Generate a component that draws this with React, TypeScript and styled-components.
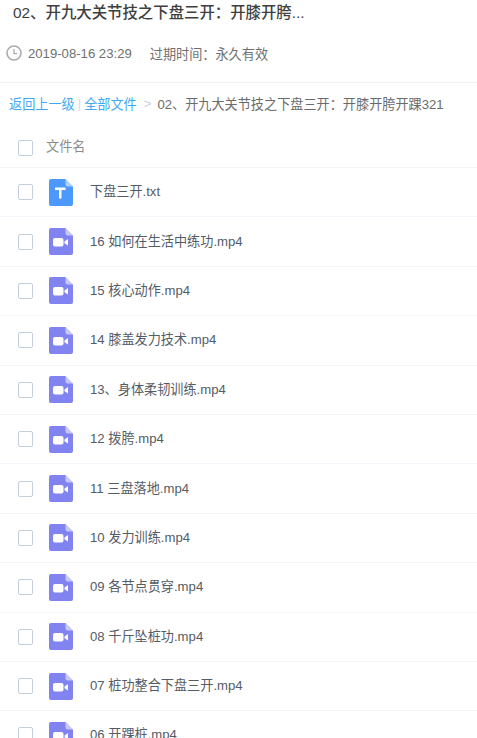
import styled, { createGlobalStyle } from "styled-components";

const GlobalStyle = createGlobalStyle`
    html, body {
        margin: 0;
        padding: 0;
        height: 100%;
        overflow: hidden;
        background-color: #fff;
        font-family: "Liberation Sans", "Noto Sans CJK SC", sans-serif;
    }
`

const Page = styled.div`
    width: 477px;
    height: 738px;
    overflow: hidden;
`

const Title = styled.h1`
    margin: 0;
    padding: 2px 0 1px 13px;
    height: 21px;
    font-size: 15.4px;
    line-height: 21px;
    font-weight: 500;
    color: #3f3f3f;
`

const Meta = styled.div`
    display: flex;
    align-items: center;
    height: 58px;
    padding-left: 6px;
    border-bottom: 1px solid #f2f2f2;
    font-size: 13.15px;
    color: #707070;

    svg {
        margin-right: 6px;
    }

    .expire {
        margin-left: 18px;
    }
`

const Crumbs = styled.div`
    display: flex;
    align-items: center;
    height: 42px;
    padding: 0 0 2px 9px;
    box-sizing: border-box;
    font-size: 13.15px;
    white-space: nowrap;
    color: #6b6b6b;

    a {
        color: #3fa9f5;
    }

    .bar {
        margin: 0 3px;
        color: #c4dff5;
    }

    .arrow {
        margin: 0 6px 0 7px;
        color: #c8d0dc;
    }
`

const Box = styled.i`
    display: block;
    flex: none;
    width: 13px;
    height: 14px;
    border: 1px solid #c4cfde;
    border-radius: 2px;
    background-color: #fff;
`

const HeadRow = styled.div`
    display: flex;
    align-items: center;
    height: 42px;
    padding-left: 18px;
    border-bottom: 1px solid #f2f4f7;
    font-size: 13.15px;
    color: #8c8c8c;

    ${Box} {
        margin-top: 3px;
    }

    span {
        margin: 0 0 2px 13px;
    }
`

const Row = styled.div`
    display: flex;
    align-items: center;
    flex: none;
    box-sizing: border-box;
    height: 49.4px;
    padding-left: 18px;
    border-bottom: 1px solid #f2f6fb;
    font-size: 13.15px;
    color: #545c66;

    svg {
        flex: none;
        margin: 0 17px 0 16px;
    }
`

const FileName = styled.span`
    margin-bottom: 3px;
`

function ClockIcon() {
    return (
        <svg width="16" height="16" viewBox="0 0 16 16" fill="none" stroke="#ababab" strokeWidth="1.6">
            <circle cx="8" cy="8" r="7" />
            <path d="M8 4v4.6h3.2" strokeWidth="1.3" />
        </svg>
    );
}

function FileIcon({ kind }: { kind: "txt" | "video" }) {
    const color = kind === "txt" ? "#4c98fb" : "#8183f1";
    return (
        <svg width="24" height="27" viewBox="0 0 24 27">
            <path d="M2 0h14.5L24 7.5V25a2 2 0 0 1-2 2H2a2 2 0 0 1-2-2V2a2 2 0 0 1 2-2z" fill={color} />
            <path d="M16.5 0L24 7.5h-5.5a2 2 0 0 1-2-2z" fill="#fff" fillOpacity="0.55" />
            {kind === "txt" ? (
                <path d="M6 8.5h10.5v2.4h-4V19.5H10v-8.6H6z" fill="#fff" />
            ) : (
                <>
                    <rect x="4" y="10" width="10.5" height="8.5" rx="2" fill="#fff" />
                    <path d="M15.5 13.6l3.5-2.6v6.6l-3.5-2.4z" fill="#fff" />
                </>
            )}
        </svg>
    );
}

const files: { name: string; kind: "txt" | "video" }[] = [
    { name: "下盘三开.txt", kind: "txt" },
    { name: "16 如何在生活中练功.mp4", kind: "video" },
    { name: "15 核心动作.mp4", kind: "video" },
    { name: "14 膝盖发力技术.mp4", kind: "video" },
    { name: "13、身体柔韧训练.mp4", kind: "video" },
    { name: "12 拨胯.mp4", kind: "video" },
    { name: "11 三盘落地.mp4", kind: "video" },
    { name: "10 发力训练.mp4", kind: "video" },
    { name: "09 各节点贯穿.mp4", kind: "video" },
    { name: "08 千斤坠桩功.mp4", kind: "video" },
    { name: "07 桩功整合下盘三开.mp4", kind: "video" },
    { name: "06 开踝桩.mp4", kind: "video" },
];

export default function App() {
    return (
        <Page>
            <GlobalStyle />
            <Title>02、开九大关节技之下盘三开：开膝开胯...</Title>
            <Meta>
                <ClockIcon />
                <span>2019-08-16 23:29</span>
                <span className="expire">过期时间：永久有效</span>
            </Meta>
            <Crumbs>
                <a>返回上一级</a>
                <span className="bar">|</span>
                <a>全部文件</a>
                <span className="arrow">&gt;</span>
                <span>02、开九大关节技之下盘三开：开膝开胯开踝321</span>
            </Crumbs>
            <HeadRow>
                <Box />
                <span>文件名</span>
            </HeadRow>
            {files.map((file) => (
                <Row key={file.name}>
                    <Box />
                    <FileIcon kind={file.kind} />
                    <FileName>{file.name}</FileName>
                </Row>
            ))}
        </Page>
    );
}
